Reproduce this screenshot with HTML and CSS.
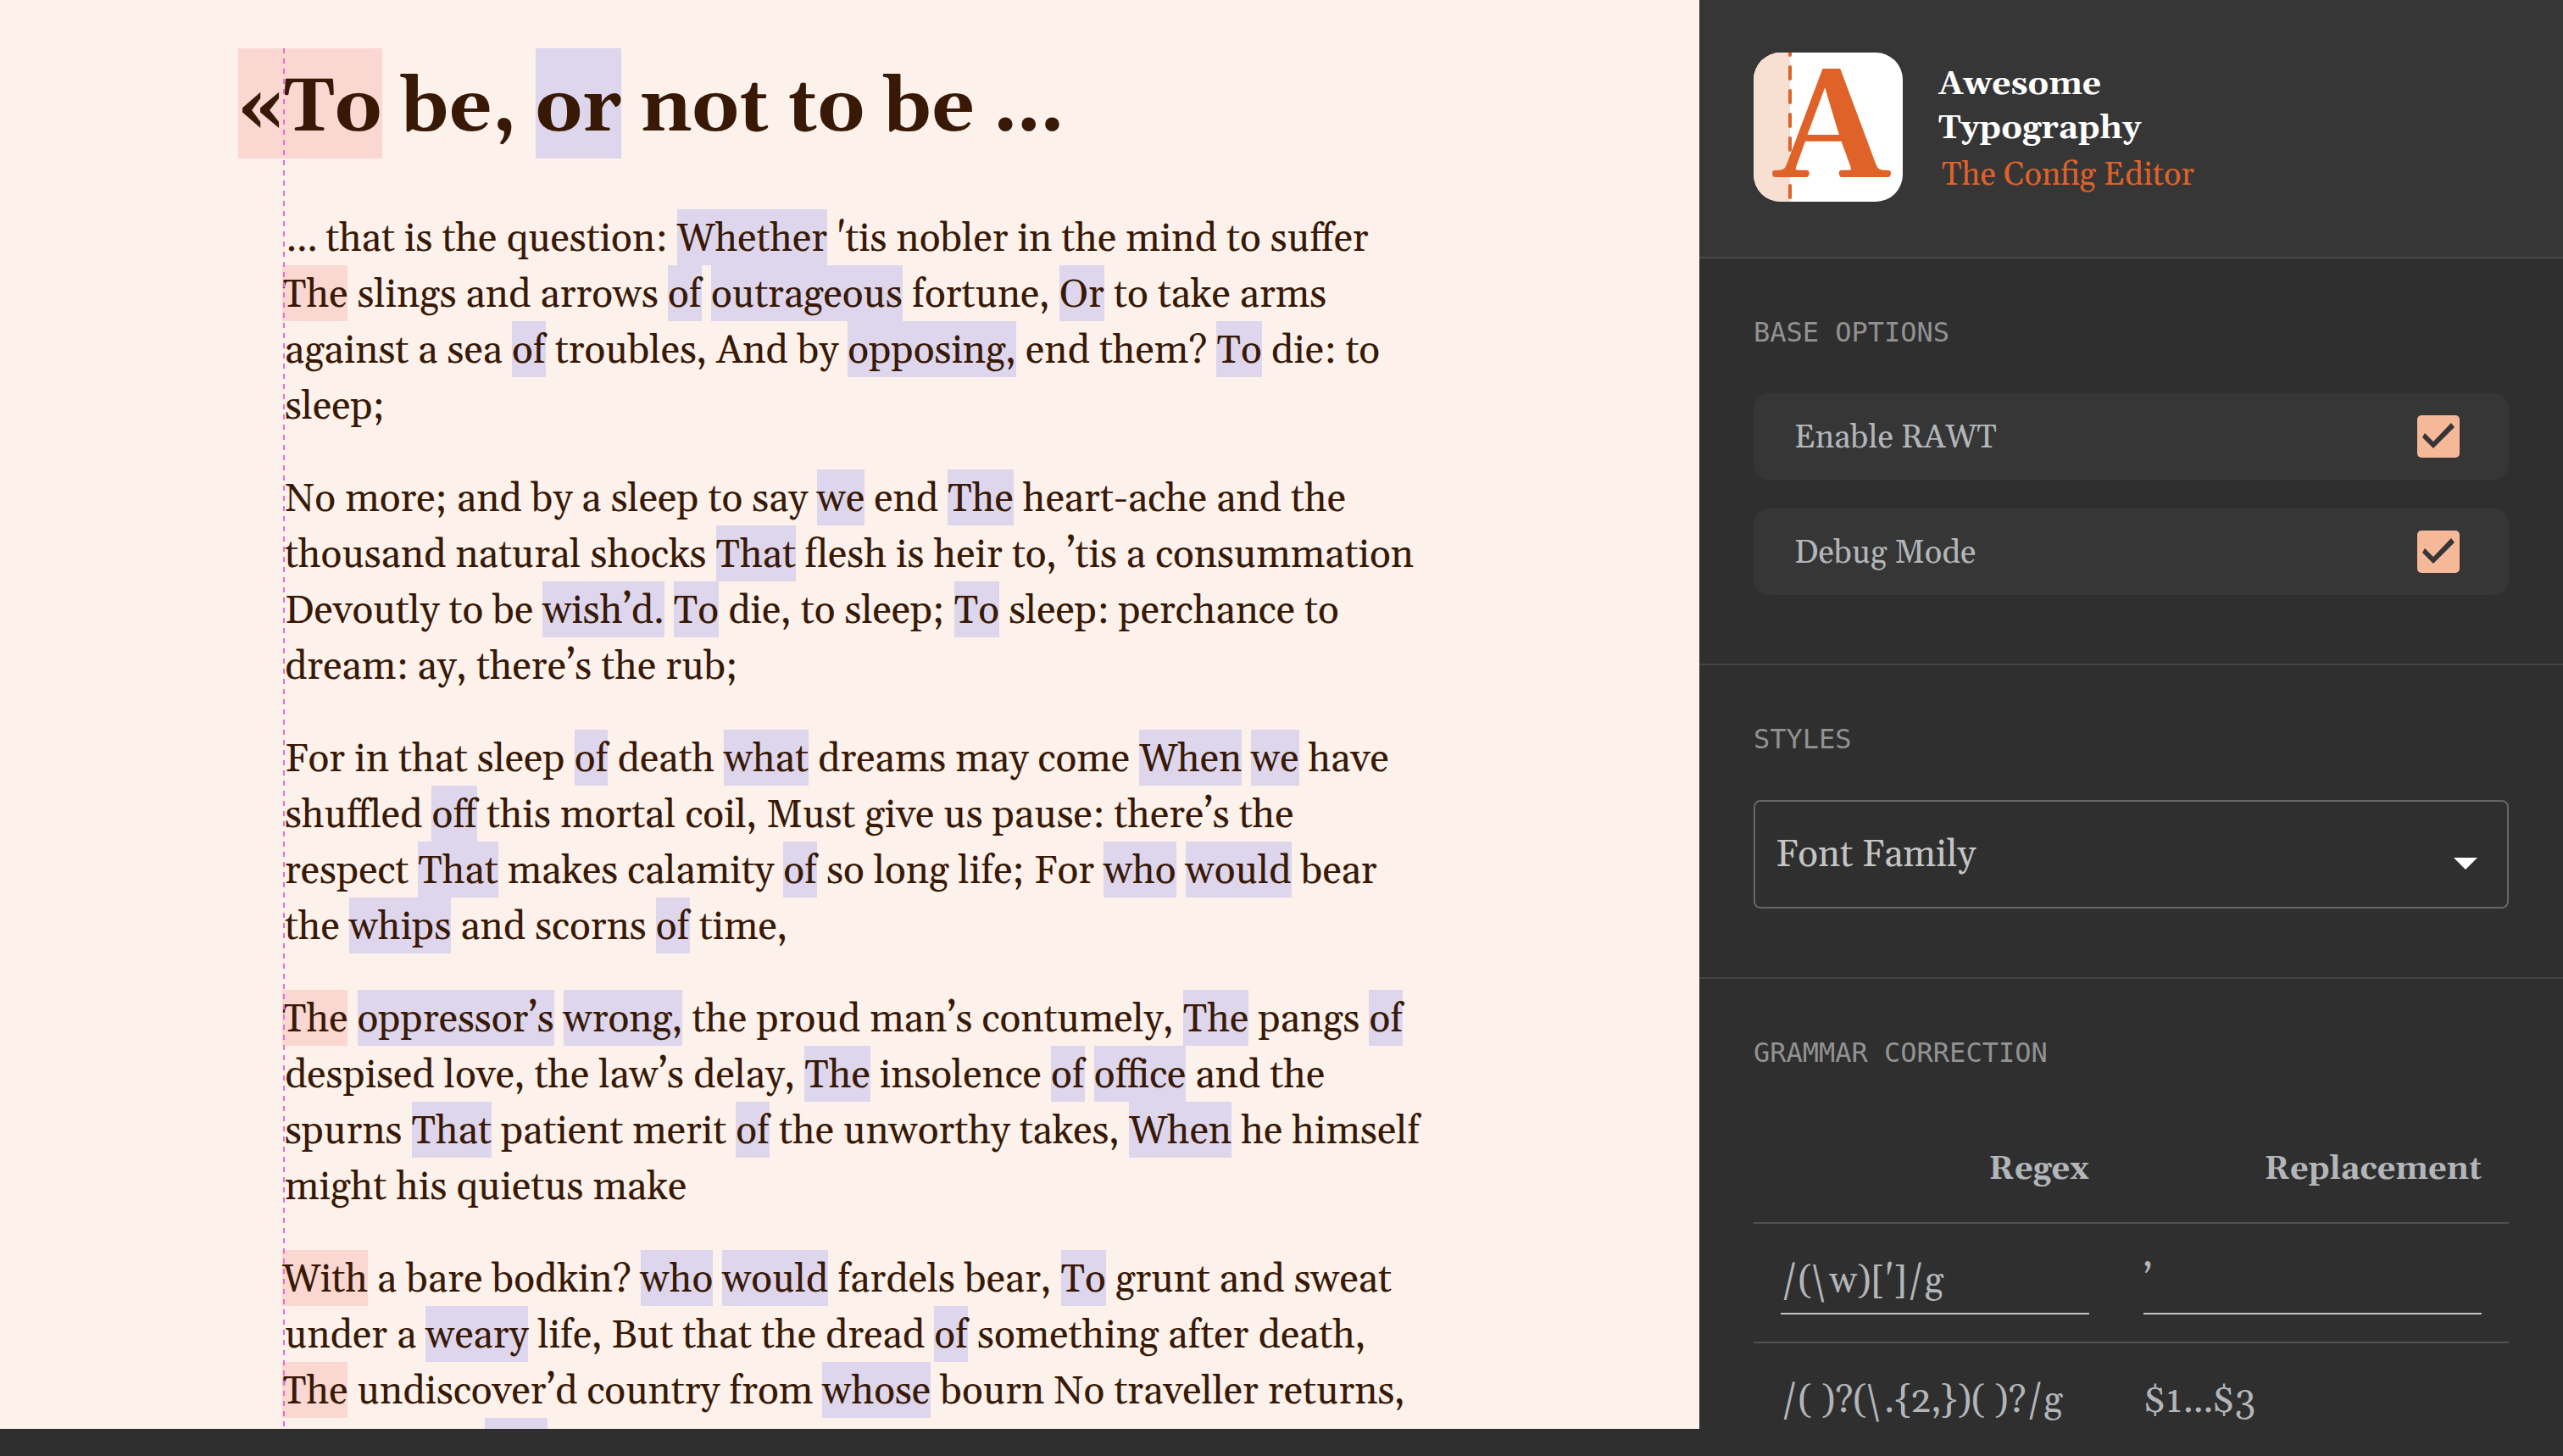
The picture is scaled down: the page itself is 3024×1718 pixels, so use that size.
FILE: index.html
```
<!DOCTYPE html>
<html lang="en">
<head>
<meta charset="utf-8">
<title>Awesome Typography – The Config Editor</title>
<link rel="stylesheet" href="styles.css">
</head>
<body>
<div class="app">
  <main class="preview">
    <article class="sample">
      <h1 class="title"><span class="mark hang quote">«To</span> be, <span class="mark">or</span> not to be …</h1>
      <p>… that is the question: <span class="mark">Whether</span> 'tis nobler in the mind to suffer<br>
        <span class="mark hang">The</span> slings and arrows <span class="mark">of</span> <span class="mark">outrageous</span> fortune, <span class="mark">Or</span> to take arms<br>
        against a sea <span class="mark">of</span> troubles, And by <span class="mark">opposing,</span> end them? <span class="mark">To</span> die: to<br>
        sleep;</p>
      <p>No more; and by a sleep to say <span class="mark">we</span> end <span class="mark">The</span> heart-ache and the<br>
        thousand natural shocks <span class="mark">That</span> flesh is heir to, ’tis a consummation<br>
        Devoutly to be <span class="mark">wish’d.</span> <span class="mark">To</span> die, to sleep; <span class="mark">To</span> sleep: perchance to<br>
        dream: ay, there’s the rub;</p>
      <p>For in that sleep <span class="mark">of</span> death <span class="mark">what</span> dreams may come <span class="mark">When</span> <span class="mark">we</span> have<br>
        shuffled <span class="mark">off</span> this mortal coil, Must give us pause: there’s the<br>
        respect <span class="mark">That</span> makes calamity <span class="mark">of</span> so long life; For <span class="mark">who</span> <span class="mark">would</span> bear<br>
        the <span class="mark">whips</span> and scorns <span class="mark">of</span> time,</p>
      <p><span class="mark hang">The</span> <span class="mark">oppressor’s</span> <span class="mark">wrong,</span> the proud man’s contumely, <span class="mark">The</span> pangs <span class="mark">of</span><br>
        despised love, the law’s delay, <span class="mark">The</span> insolence <span class="mark">of</span> <span class="mark">office</span> and the<br>
        spurns <span class="mark">That</span> patient merit <span class="mark">of</span> the unworthy takes, <span class="mark">When</span> he himself<br>
        might his quietus make</p>
      <p><span class="mark hang">With</span> a bare bodkin? <span class="mark">who</span> <span class="mark">would</span> fardels bear, <span class="mark">To</span> grunt and sweat<br>
        under a <span class="mark">weary</span> life, But that the dread <span class="mark">of</span> something after death,<br>
        <span class="mark hang">The</span> undiscover’d country from <span class="mark">whose</span> bourn No traveller returns,<br>
        puzzles the <span class="mark">will</span></p>
    </article>
  </main>
  <aside class="sidebar">
    <header class="brand">
      <svg class="logo" viewBox="0 0 176 176" role="img" aria-label="Awesome Typography logo">
        <defs><clipPath id="tile"><rect width="176" height="176" rx="32"/></clipPath></defs>
        <g clip-path="url(#tile)">
          <rect width="176" height="176" fill="#fff"/>
          <rect width="43" height="176" fill="#f7dfd1"/>
          <path d="M43 -11V3M43 17V31M43 45V59M43 73V87M43 101V115M43 157V171" stroke="#df6229" stroke-width="4" stroke-linecap="round"/>
        </g>
        <text class="logo-letter" x="92" y="147" text-anchor="middle">A</text>
      </svg>
      <div class="brand-text">
        <div class="brand-name">Awesome<br>Typography</div>
        <div class="brand-sub">The Config Editor</div>
      </div>
    </header>
    <section class="panel">
      <h2>BASE OPTIONS</h2>
      <div class="options">
        <label class="option"><span>Enable RAWT</span> <input type="checkbox" checked></label>
        <label class="option"><span>Debug Mode</span> <input type="checkbox" checked></label>
      </div>
    </section>
    <section class="panel">
      <h2>STYLES</h2>
      <div class="select">
        <select aria-label="Font Family"><option>Font Family</option></select>
      </div>
    </section>
    <section class="panel">
      <h2>GRAMMAR CORRECTION</h2>
      <table>
        <thead><tr><th scope="col" class="col-regex">Regex</th><th scope="col">Replacement</th></tr></thead>
        <tbody>
          <tr><td><input type="text" aria-label="Regex 1" value="/(\w)[']/g"></td><td><input type="text" aria-label="Replacement 1" value="’"></td></tr>
          <tr><td><input type="text" aria-label="Regex 2" value="/( )?(\.{2,})( )?/g"></td><td><input type="text" aria-label="Replacement 2" value="$1…$3"></td></tr>
        </tbody>
      </table>
    </section>
  </aside>
</div>
</body>
</html>
```
FILE: styles.css
```
* { box-sizing: border-box; }

body {
  margin: 0;
  background: #2f2f2f;
  font-family: Georgia, Gelasio, "Liberation Serif", serif;
}

.app {
  display: flex;
  height: calc(100vh - 32px);
  overflow: hidden;
}

/* Text preview */
.preview {
  flex: 1;
  min-width: 0;
  padding-top: 57px;
  overflow: hidden;
  background: #fcf1eb;
  color: #381906;
}

.sample {
  position: relative;
  max-width: 1333px;
  margin: 0 auto;
  padding-top: 6px;
  font-size: 46px;
  line-height: 66px;
  white-space: nowrap;
}

/* Dashed guide along the text edge */
.sample::before {
  content: "";
  position: absolute;
  top: 0;
  bottom: 0;
  left: -2px;
  width: 2px;
  background: repeating-linear-gradient(#e96fd0 0 6px, transparent 6px 12px);
}

.title {
  margin: 0 0 57px;
  font-size: 88px;
  line-height: 130px;
}

.sample p { margin: 0 0 43px; }

/* Highlights fill the whole line, with the text a little below its middle */
.mark {
  display: inline-block;
  margin-top: -3px;
  padding-top: 6px;
  background: #ded6ec;
  line-height: 60px;
}

.title .mark {
  margin-top: -6px;
  padding-top: 12px;
  line-height: 118px;
}

.hang {
  margin-left: -3px;
  background: #fad7d0;
}

.quote { margin-left: -55px; }

/* Sidebar */
.sidebar {
  flex: 0 0 33.7%;
  overflow: hidden;
  background: #2f2f2f;
  color: #b2b6b9;
}

.brand {
  display: flex;
  align-items: center;
  gap: 42px;
  padding: 62px 64px 65px;
  border-bottom: 2px solid #4a4a4a;
  background: #363636;
}

.logo { width: 176px; height: 176px; }

.logo-letter {
  fill: #df6229;
  font-size: 182px;
  font-weight: bold;
}

.brand-text { padding-top: 10px; }

.brand-name {
  color: #fff;
  font-size: 39px;
  font-weight: bold;
  line-height: 52px;
}

.brand-sub {
  padding-left: 4px;
  color: #df6229;
  font-size: 38px;
  line-height: 58px;
}

.panel {
  padding: 68px 64px 81px;
  border-bottom: 2px solid #444;
}

h2 {
  margin: 0 0 53px;
  color: #929292;
  font: 32px/38px "DejaVu Sans Mono", monospace;
}

.options { display: grid; gap: 34px; }

.option {
  display: flex;
  align-items: center;
  justify-content: space-between;
  height: 102px;
  padding: 0 58px 0 48px;
  border-radius: 18px;
  background: #363636;
  font-size: 38px;
}

.option span { padding-top: 4px; }

.option input {
  appearance: none;
  width: 50px;
  height: 50px;
  margin: 0;
  border-radius: 5px;
  background: #f5b999;
}

.option input:checked::before {
  content: "";
  display: block;
  width: 50px;
  height: 50px;
  background: #363636;
  clip-path: polygon(6px 26px, 9px 21px, 19px 31px, 40px 9px, 44px 14px, 19px 39px);
}

.select { position: relative; }

.select::after {
  content: "";
  position: absolute;
  right: 37px;
  top: 68px;
  border: 14px solid transparent;
  border-top-color: #fff;
  border-bottom: 0;
  pointer-events: none;
}

select {
  appearance: none;
  display: block;
  width: 100%;
  height: 128px;
  padding: 2px 24px 0;
  border: 2px solid #666;
  border-radius: 8px;
  background: transparent;
  color: #c4c4c4;
  font-family: inherit;
  font-size: 44px;
}

table {
  width: 100%;
  border-collapse: collapse;
  table-layout: fixed;
}

.col-regex { width: 48%; }

th {
  height: 129px;
  padding: 4px 32px 0;
  border-bottom: 2px solid #505050;
  font-size: 38px;
  text-align: right;
}

td {
  padding: 32px;
  border-bottom: 2px solid #505050;
}

td input {
  display: block;
  width: 100%;
  height: 75px;
  padding: 0 0 2px;
  border: 0;
  border-bottom: 2px solid #c4c6c6;
  background: transparent;
  color: inherit;
  font-family: inherit;
  font-size: 44px;
}
```
